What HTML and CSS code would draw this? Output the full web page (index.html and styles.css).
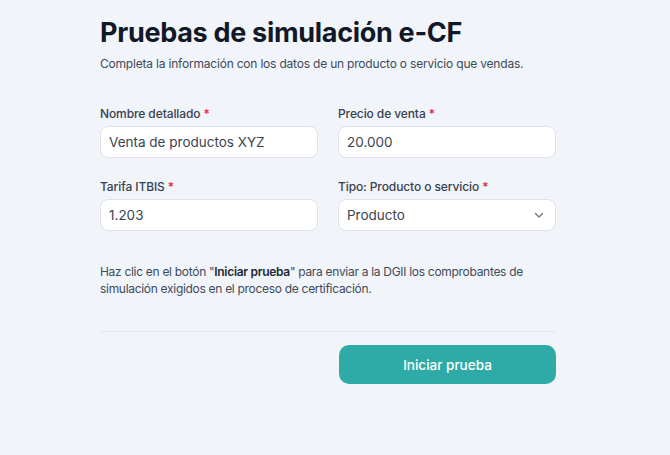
FILE: index.html
```html
<!DOCTYPE html>
<html lang="es">
<head>
<meta charset="utf-8">
<title>Pruebas de simulación e-CF</title>
<link rel="stylesheet" href="styles.css">
</head>
<body>
<main class="page">
  <h1 class="title">Pruebas de simulación e-CF</h1>
  <p class="subtitle">Completa la información con los datos de un producto o servicio que vendas.</p>

  <form class="form">
    <div class="grid">
      <label class="field">
        <span class="label">Nombre detallado <span class="req">*</span></span>
        <input class="input" type="text" value="Venta de productos XYZ">
      </label>
      <label class="field">
        <span class="label">Precio de venta <span class="req">*</span></span>
        <input class="input" type="text" value="20.000">
      </label>
      <label class="field">
        <span class="label">Tarifa ITBIS <span class="req">*</span></span>
        <input class="input" type="text" value="1.203">
      </label>
      <label class="field">
        <span class="label">Tipo: Producto o servicio <span class="req">*</span></span>
        <span class="select-wrap">
          <select class="input select">
            <option>Producto</option>
            <option>Servicio</option>
          </select>
          <svg class="chevron" width="12" height="12" viewBox="0 0 12 12" fill="none"><path d="M2.5 4.5 6 8l3.5-3.5" stroke="#6b7280" stroke-width="1.3" stroke-linecap="round" stroke-linejoin="round"/></svg>
        </span>
      </label>
    </div>

    <p class="note">Haz clic en el botón "<strong>Iniciar prueba</strong>" para enviar a la DGII los comprobantes de simulación exigidos en el proceso de certificación.</p>

    <hr class="divider">

    <div class="actions">
      <button class="btn" type="button">Iniciar prueba</button>
    </div>
  </form>
</main>
</body>
</html>
```

FILE: styles.css
```css
* { box-sizing: border-box; }
html, body { margin: 0; padding: 0; }
body {
  background: #f1f4f9;
  font-family: Inter, "Noto Sans", sans-serif;
  color: #374151;
}
.page {
  width: 456px;
  margin-left: 100px;
  padding-top: 16px;
}
.title {
  margin: 0;
  font-size: 27px;
  font-weight: 700;
  color: #111827;
  letter-spacing: -0.3px;
  line-height: 34px;
}
.subtitle {
  margin: 4px 0 0;
  font-size: 12px;
  line-height: 20px;
  letter-spacing: -0.2px;
  color: #3f4a5a;
}
.form { margin-top: 32px; }
.grid {
  display: grid;
  grid-template-columns: 1fr 1fr;
  column-gap: 20px;
  row-gap: 21px;
}
.field {
  display: flex;
  flex-direction: column;
  gap: 4px;
}
.label {
  font-size: 12px;
  font-weight: 500;
  line-height: 16px;
  letter-spacing: -0.1px;
  color: #374151;
}
.req { color: #e11d48; }
.input {
  width: 100%;
  height: 32px;
  border: 1px solid #dde2ea;
  border-radius: 8px;
  background: #fff;
  padding: 0 8px;
  font-family: inherit;
  font-size: 13.5px;
  color: #3b4452;
  outline: none;
}
.select-wrap { position: relative; display: block; }
.select {
  appearance: none;
  -webkit-appearance: none;
}
.chevron {
  position: absolute;
  right: 11px;
  top: 10px;
  pointer-events: none;
}
.note {
  margin: 32px 0 0;
  font-size: 12px;
  line-height: 17px;
  letter-spacing: -0.3px;
  color: #3f4a5a;
}
.note strong { font-weight: 600; color: #1f2937; }
.divider {
  margin: 34px 0 0;
  border: 0;
  border-top: 1px solid #e3e7ee;
}
.actions {
  display: flex;
  justify-content: flex-end;
  margin-top: 13px;
}
.btn {
  width: 217px;
  height: 39px;
  border: 0;
  border-radius: 10px;
  background: #2faba7;
  color: #fff;
  font-family: inherit;
  font-size: 13.5px;
  font-weight: 500;
}
```
